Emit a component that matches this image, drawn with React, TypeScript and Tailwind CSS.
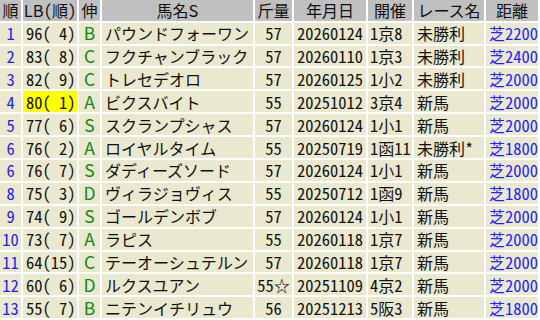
import type { ReactNode } from "react";

interface Row {
  no: number;
  lb: number;
  rank: number;
  nobi: string;
  name: string;
  kg: string;
  date: string;
  place: string;
  race: string;
  dist: string;
  hl?: string;
}

const rows: Row[] = [
  { no: 1, lb: 96, rank: 4, nobi: "B", name: "パウンドフォーワン", kg: "57", date: "20260124", place: "1京8", race: "未勝利", dist: "芝2200" },
  { no: 2, lb: 83, rank: 8, nobi: "C", name: "フクチャンブラック", kg: "57", date: "20260110", place: "1京3", race: "未勝利", dist: "芝2400" },
  { no: 3, lb: 82, rank: 9, nobi: "C", name: "トレセデオロ", kg: "57", date: "20260125", place: "1小2", race: "未勝利", dist: "芝2000" },
  { no: 4, lb: 80, rank: 1, nobi: "A", name: "ビクスバイト", kg: "55", date: "20251012", place: "3京4", race: "新馬", dist: "芝2000", hl: "bg-[#ffff00]" },
  { no: 5, lb: 77, rank: 6, nobi: "S", name: "スクランプシャス", kg: "57", date: "20260124", place: "1小1", race: "新馬", dist: "芝2000" },
  { no: 6, lb: 76, rank: 2, nobi: "A", name: "ロイヤルタイム", kg: "55", date: "20250719", place: "1函11", race: "未勝利*", dist: "芝1800", hl: "bg-[#00ffff]" },
  { no: 6, lb: 76, rank: 7, nobi: "S", name: "ダディーズソード", kg: "57", date: "20260124", place: "1小1", race: "新馬", dist: "芝2000" },
  { no: 8, lb: 75, rank: 3, nobi: "D", name: "ヴィラジョヴィス", kg: "55", date: "20250712", place: "1函9", race: "新馬", dist: "芝1800", hl: "bg-[#00ff00]" },
  { no: 9, lb: 74, rank: 9, nobi: "S", name: "ゴールデンボブ", kg: "57", date: "20260124", place: "1小1", race: "新馬", dist: "芝2000" },
  { no: 10, lb: 73, rank: 7, nobi: "A", name: "ラピス", kg: "55", date: "20260118", place: "1京7", race: "新馬", dist: "芝2000" },
  { no: 11, lb: 64, rank: 15, nobi: "C", name: "テーオーシュテルン", kg: "57", date: "20260118", place: "1京7", race: "新馬", dist: "芝2000" },
  { no: 12, lb: 60, rank: 6, nobi: "D", name: "ルクスユアン", kg: "55☆", date: "20251109", place: "4京2", race: "新馬", dist: "芝2000" },
  { no: 13, lb: 55, rank: 7, nobi: "B", name: "ニテンイチリュウ", kg: "56", date: "20251213", place: "5阪3", race: "新馬", dist: "芝1800" },
];

const headers = ["順", "LB(順)", "伸", "馬名S", "斤量", "年月日", "開催", "レース名", "距離"];

// digits, brackets and spaces are half-width; latin letters stay proportional
function Txt({ s }: { s: string }) {
  const parts = s.split(/([0-9() *]+|[A-Za-z]+)/).filter(Boolean);
  return (
    <>
      {parts.map((p, i) =>
        /^[0-9() *]+$/.test(p) ? (
          <span key={i} className="whitespace-pre text-[16.5px] [font-feature-settings:'hwid']">
            {p}
          </span>
        ) : /^[A-Za-z]+$/.test(p) ? (
          <span key={i} className="text-[16.5px]">
            {p}
          </span>
        ) : (
          <span key={i}>{p}</span>
        )
      )}
    </>
  );
}

function Cell({ children, className = "" }: { children?: ReactNode; className?: string }) {
  return (
    <div className={`flex h-[20.9px] items-center whitespace-nowrap bg-[#eae8cf] ${className}`}>
      {children}
    </div>
  );
}

export default function App() {
  return (
    <div className="h-[320px] w-[540px] overflow-hidden bg-white font-['Noto_Sans_CJK_JP',sans-serif] text-[16px] leading-[20px] text-[#111]">
      <div className="grid grid-cols-[21px_54px_21px_151px_37px_72px_44px_70px_52px] gap-[2px]">
        {/* Header */}
        {headers.map((h) => (
          <div key={h} className="flex h-[20.7px] items-center justify-center whitespace-nowrap bg-[#c0c0c0]">
            <Txt s={h} />
          </div>
        ))}

        {rows.map((r, i) => (
          <Row key={i} r={r} />
        ))}
      </div>
    </div>
  );
}

function Row({ r }: { r: Row }) {
  const lb = `${r.lb}(${r.rank < 10 ? " " : ""}${r.rank})`;
  return (
    <>
      <Cell className="justify-center bg-[#e0e0f8] text-[#1f1fee]">
        <Txt s={String(r.no)} />
      </Cell>
      <Cell className={`pl-[3px] ${r.hl ?? ""}`}>
        <Txt s={lb} />
      </Cell>
      <Cell className="justify-center text-[#118811]">
        <span className="text-[17.5px] leading-[18px]">{r.nobi}</span>
      </Cell>
      <Cell className="pl-[3px]">
        <Txt s={r.name} />
      </Cell>
      <Cell className="justify-center">
        <Txt s={r.kg} />
      </Cell>
      <Cell className="pl-[3px]">
        <Txt s={r.date} />
      </Cell>
      <Cell className="pl-[2px]">
        <Txt s={r.place} />
      </Cell>
      <Cell className="pl-[3px]">
        <Txt s={r.race} />
      </Cell>
      <Cell className="pl-[3px] text-[#1f1fff]">
        <Txt s={r.dist} />
      </Cell>
    </>
  );
}
